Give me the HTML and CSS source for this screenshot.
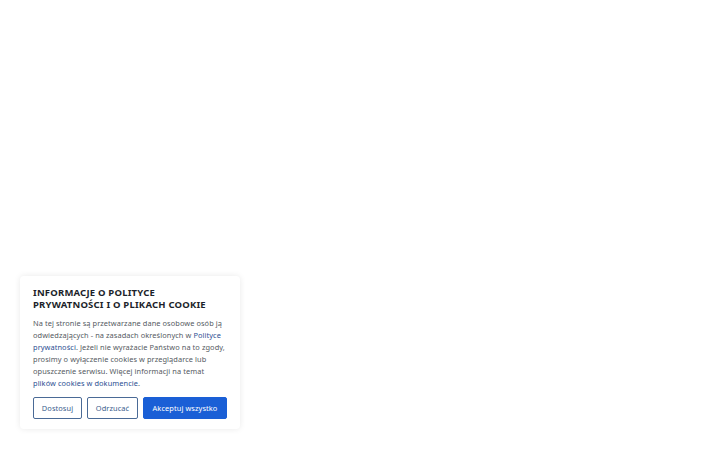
FILE: index.html
```
<!DOCTYPE html>
<html lang="pl">
<head>
    <meta charset="UTF-8">
    <meta name="viewport" content="width=device-width, initial-scale=1.0">
    <title>Polityka cookie</title>
    <link rel="stylesheet" href="styles.css">
</head>
<body>

<!-- Okno z informacją o cookies -->
<div class="cookie-box">
    <h2 class="cookie-title">INFORMACJE O POLITYCE PRYWATNOŚCI I O PLIKACH COOKIE</h2>
    <p class="cookie-text">
        Na tej stronie są przetwarzane dane osobowe osób ją odwiedzających - na zasadach określonych w
        <a href="#">Polityce prywatności</a>. Jeżeli nie wyrażacie Państwo na to zgody, prosimy o wyłączenie
        cookies w przeglądarce lub opuszczenie serwisu. Więcej informacji na temat
        <a href="#">plików cookies w dokumencie</a>.
    </p>
    <div class="cookie-buttons">
        <button class="btn btn-outline">Dostosuj</button>
        <button class="btn btn-outline">Odrzucać</button>
        <button class="btn btn-primary">Akceptuj wszystko</button>
    </div>
</div>

</body>
</html>
```

FILE: styles.css
```
body {
    margin: 0;
    width: 720px;
    height: 450px;
    background: #fff;
    font-family: "Noto Sans", "DejaVu Sans", sans-serif;
    display: flex;
    align-items: flex-end;
}

/* Okno cookie */
.cookie-box {
    width: 194px;
    margin: 0 0 21px 20px;
    padding: 11px 13px 10px 13px;
    background: #fff;
    border-radius: 4px;
    box-shadow: 0 0 6px rgba(0, 0, 0, 0.09);
}

.cookie-title {
    max-width: 180px;
    margin: 0 0 6px 0;
    font-size: 9.5px;
    line-height: 12px;
    letter-spacing: 0.2px;
    font-weight: 700;
    color: #1c1f2a;
}

.cookie-text {
    margin: 0 0 8px 0;
    font-size: 7.4px;
    line-height: 12px;
    letter-spacing: 0.08px;
    color: #555a62;
}

.cookie-text a {
    color: #2c4f93;
    text-decoration: none;
}

/* Pogas */
.cookie-buttons {
    display: flex;
    gap: 5px;
}

.btn {
    height: 22px;
    padding: 0 4px;
    font-family: inherit;
    font-size: 7.4px;
    letter-spacing: 0.1px;
    border-radius: 2px;
    cursor: pointer;
}

.btn-outline {
    background: #fff;
    color: #3a5c8c;
    border: 1.5px solid #4a6a96;
}

.btn-outline:first-child {
    width: 49px;
}

.btn-outline:nth-child(2) {
    width: 51px;
}

.btn-primary {
    width: 84px;
    background: #1a5fd6;
    color: #fff;
    border: 1px solid #1a5fd6;
}
```
